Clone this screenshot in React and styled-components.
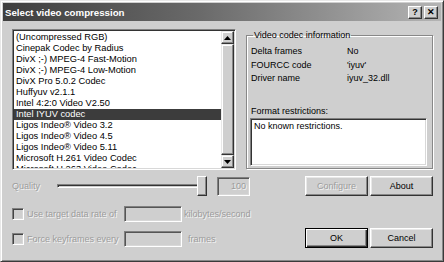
import React from "react";
import styled, { createGlobalStyle } from "styled-components";

const Global = createGlobalStyle`
  html, body { margin: 0; padding: 0; background: #cfcfcf; }
  * { box-sizing: border-box; }
  body { font-family: "Liberation Sans", Arial, sans-serif; font-size: 9px; color: #000; }
`;

const FACE = "#cfcfcf";

const Window = styled.div`
  width: 444px;
  height: 262px;
  background: ${FACE};
  border: 1px solid;
  border-color: #e8e8e8 #3a3a3a #3a3a3a #e8e8e8;
  padding: 2px;
  display: flex;
  flex-direction: column;
  box-shadow: inset 1px 1px 0 #ffffff, inset -1px -1px 0 #888;
`;

const TitleBar = styled.div`
  height: 18px;
  background: linear-gradient(to right, #3e3e3e 0%, #6a6a6a 45%, #b4b4b4 100%);
  display: flex;
  align-items: center;
  padding: 0 3px 0 2px;
`;

const TitleText = styled.div`
  flex: 1;
  color: #fff;
  font-weight: bold;
  font-size: 9.7px;
  font-family: "Liberation Sans", Arial, sans-serif;
`;

const CaptionButton = styled.div`
  width: 14px;
  height: 13px;
  margin-left: ${(p) => p.$gap || 0}px;
  background: ${FACE};
  border: 1px solid;
  border-color: #fff #333 #333 #fff;
  box-shadow: inset -1px -1px 0 #888;
  display: flex;
  align-items: center;
  justify-content: center;
  font-weight: bold;
  font-size: 9px;
  line-height: 1;
  color: #000;
`;

const Body = styled.div`
  flex: 1;
  padding: 8px 8px 0 9px;
  display: flex;
  flex-direction: column;
`;

const TopRow = styled.div`
  display: flex;
  align-items: flex-start;
`;

const ListBox = styled.div`
  width: 225px;
  height: 141px;
  border: 1px solid;
  border-color: #808080 #fff #fff #808080;
  box-shadow: inset 1px 1px 0 #333, inset -1px -1px 0 #d8d8d8;
  background: #fff;
  display: flex;
  padding: 1px;
`;

const Items = styled.div`
  flex: 1;
  overflow: hidden;
  padding-top: 1px;
`;

const Item = styled.div`
  height: 11px;
  line-height: 11px;
  padding-left: 2px;
  white-space: nowrap;
  font-size: 9.3px;
  background: ${(p) => (p.$selected ? "#3c3c3c" : "transparent")};
  color: ${(p) => (p.$selected ? "#fff" : "#000")};
`;

const ScrollBar = styled.div`
  width: 13px;
  display: flex;
  flex-direction: column;
  background: #e6e6e6;
`;

const ScrollButton = styled.div`
  height: 13px;
  background: ${FACE};
  border: 1px solid;
  border-color: #e8e8e8 #333 #333 #e8e8e8;
  box-shadow: inset -1px -1px 0 #888, inset 1px 1px 0 #fff;
  display: flex;
  align-items: center;
  justify-content: center;
`;

const Thumb = styled.div`
  flex: 1;
  background: ${FACE};
  border: 1px solid;
  border-color: #e8e8e8 #333 #333 #e8e8e8;
  box-shadow: inset -1px -1px 0 #888, inset 1px 1px 0 #fff;
`;

const Arrow = ({ down }) => (
  <svg width="7" height="4" viewBox="0 0 7 4">
    {down ? <polygon points="0,0 7,0 3.5,4" fill="#000" /> : <polygon points="0,4 7,4 3.5,0" fill="#000" />}
  </svg>
);

const Group = styled.fieldset`
  margin: 1px 0 0 10px;
  width: 188px;
  height: 139px;
  border: 1px solid #888;
  box-shadow: 1px 1px 0 #fff, inset 1px 1px 0 #fff;
  padding: 4px 3px 0 3px;
  min-width: 0;
`;

const Legend = styled.legend`
  padding: 0 1px;
  margin-left: 3px;
  font-size: 9px;
  line-height: 11px;
`;

const InfoRow = styled.div`
  display: flex;
  height: 13.5px;
  line-height: 13.5px;
  padding-left: 1px;
`;

const InfoLabel = styled.div`
  width: 96px;
`;

const FormatLabel = styled.div`
  margin-top: 20px;
  line-height: 11px;
  padding-left: 1px;
`;

const TextArea = styled.div`
  margin-top: 1px;
  width: 177px;
  height: 48px;
  background: #fff;
  border: 1px solid;
  border-color: #808080 #fff #fff #808080;
  box-shadow: inset 1px 1px 0 #333, inset -1px -1px 0 #d8d8d8;
  padding: 2px 3px;
  line-height: 11px;
`;

const Lower = styled.div`
  display: flex;
  margin-top: 6px;
`;

const LeftCol = styled.div`
  width: 241px;
  display: flex;
  flex-direction: column;
`;

const RightCol = styled.div`
  margin-left: auto;
  display: flex;
  flex-direction: column;
  width: 128px;
`;

const Disabled = styled.span`
  color: #9c9c9c;
  text-shadow: 1px 1px 0 #f4f4f4;
  white-space: nowrap;
  margin-left: ${(p) => p.$ml || 0}px;
`;

const QualityRow = styled.div`
  height: 20px;
  display: flex;
  align-items: center;
`;

const QualityLabel = styled.div`
  width: 45px;
  line-height: 11px;
`;

const Slider = styled.div`
  width: 150px;
  height: 20px;
  display: flex;
  align-items: center;
`;

const Track = styled.div`
  flex: 1;
  height: 4px;
  border: 1px solid;
  border-color: #808080 #fff #fff #808080;
  box-shadow: inset 1px 1px 0 #333;
  background: #cfcfcf;
`;

const SliderThumb = styled.div`
  width: 10px;
  height: 20px;
  margin-left: -3px;
  background: ${FACE};
  border: 1px solid;
  border-color: #fff #333 #333 #fff;
  box-shadow: inset -1px -1px 0 #888;
`;

const Edit = styled.div`
  width: ${(p) => p.$w}px;
  height: ${(p) => p.$h}px;
  margin-left: ${(p) => p.$ml || 0}px;
  background: ${FACE};
  border: 1px solid;
  border-color: #808080 #fff #fff #808080;
  box-shadow: inset 1px 1px 0 #555, inset -1px -1px 0 #d8d8d8;
  display: flex;
  align-items: center;
  justify-content: flex-end;
  padding-right: 3px;
  line-height: 11px;
`;

const CheckRow = styled.div`
  display: flex;
  align-items: center;
  height: 16px;
  margin-top: ${(p) => p.$mt}px;
`;

const CheckBox = styled.div`
  width: 12px;
  height: 12px;
  margin-right: 3px;
  border: 1px solid;
  border-color: #808080 #fff #fff #808080;
  box-shadow: inset 1px 1px 0 #444, inset -1px -1px 0 #d8d8d8;
  background: #cfcfcf;
`;

const CheckLabel = styled.div`
  width: 97px;
  line-height: 11px;
`;

const ButtonRow = styled.div`
  display: flex;
  gap: 2px;
  margin-top: ${(p) => p.$mt || 0}px;
`;

const Button = styled.div`
  width: 63px;
  height: 20px;
  background: ${FACE};
  border: 1px solid;
  border-color: ${(p) => (p.$default ? "#000" : "#fff #333 #333 #fff")};
  box-shadow: ${(p) =>
    p.$default
      ? "inset 1px 1px 0 #fff, inset -1px -1px 0 #333, inset -2px -2px 0 #888"
      : "inset -1px -1px 0 #888, inset 1px 1px 0 #e8e8e8"};
  display: flex;
  align-items: center;
  justify-content: center;
  line-height: 11px;
  color: #000;
`;

const codecs = [
  "(Uncompressed RGB)",
  "Cinepak Codec by Radius",
  "DivX ;-) MPEG-4 Fast-Motion",
  "DivX ;-) MPEG-4 Low-Motion",
  "DivX Pro 5.0.2 Codec",
  "Huffyuv v2.1.1",
  "Intel 4:2:0 Video V2.50",
  "Intel IYUV codec",
  "Ligos Indeo® Video 3.2",
  "Ligos Indeo® Video 4.5",
  "Ligos Indeo® Video 5.11",
  "Microsoft H.261 Video Codec",
  "Microsoft H.263 Video Codec",
];

const info = [
  ["Delta frames", "No"],
  ["FOURCC code", "'iyuv'"],
  ["Driver name", "iyuv_32.dll"],
];

export default function App() {
  return (
    <>
      <Global />
      <Window>
        <TitleBar>
          <TitleText>Select video compression</TitleText>
          <CaptionButton>?</CaptionButton>
          <CaptionButton $gap={2}>✕</CaptionButton>
        </TitleBar>
        <Body>
          <TopRow>
            <ListBox>
              <Items>
                {codecs.map((c) => (
                  <Item key={c} $selected={c === "Intel IYUV codec"}>
                    {c}
                  </Item>
                ))}
              </Items>
              <ScrollBar>
                <ScrollButton>
                  <Arrow />
                </ScrollButton>
                <Thumb />
                <ScrollButton>
                  <Arrow down />
                </ScrollButton>
              </ScrollBar>
            </ListBox>
            <Group>
              <Legend>Video codec information</Legend>
              {info.map(([k, v]) => (
                <InfoRow key={k}>
                  <InfoLabel>{k}</InfoLabel>
                  <div>{v}</div>
                </InfoRow>
              ))}
              <FormatLabel>Format restrictions:</FormatLabel>
              <TextArea>No known restrictions.</TextArea>
            </Group>
          </TopRow>
          <Lower>
            <LeftCol>
              <QualityRow>
                <QualityLabel>
                  <Disabled>Quality</Disabled>
                </QualityLabel>
                <Slider>
                  <Track />
                  <SliderThumb />
                </Slider>
                <Edit $w={33} $h={19} $ml={10}>
                  <Disabled>100</Disabled>
                </Edit>
              </QualityRow>
              <CheckRow $mt={10}>
                <CheckBox />
                <CheckLabel>
                  <Disabled>Use target data rate of</Disabled>
                </CheckLabel>
                <Edit $w={58} $h={16} />
                <Disabled $ml={2}>kilobytes/second</Disabled>
              </CheckRow>
              <CheckRow $mt={9}>
                <CheckBox />
                <CheckLabel>
                  <Disabled>Force keyframes every</Disabled>
                </CheckLabel>
                <Edit $w={58} $h={16} />
                <Disabled $ml={6}>frames</Disabled>
              </CheckRow>
            </LeftCol>
            <RightCol>
              <ButtonRow>
                <Button>
                  <Disabled>Configure</Disabled>
                </Button>
                <Button>About</Button>
              </ButtonRow>
              <ButtonRow $mt={32}>
                <Button $default>OK</Button>
                <Button>Cancel</Button>
              </ButtonRow>
            </RightCol>
          </Lower>
        </Body>
      </Window>
    </>
  );
}
